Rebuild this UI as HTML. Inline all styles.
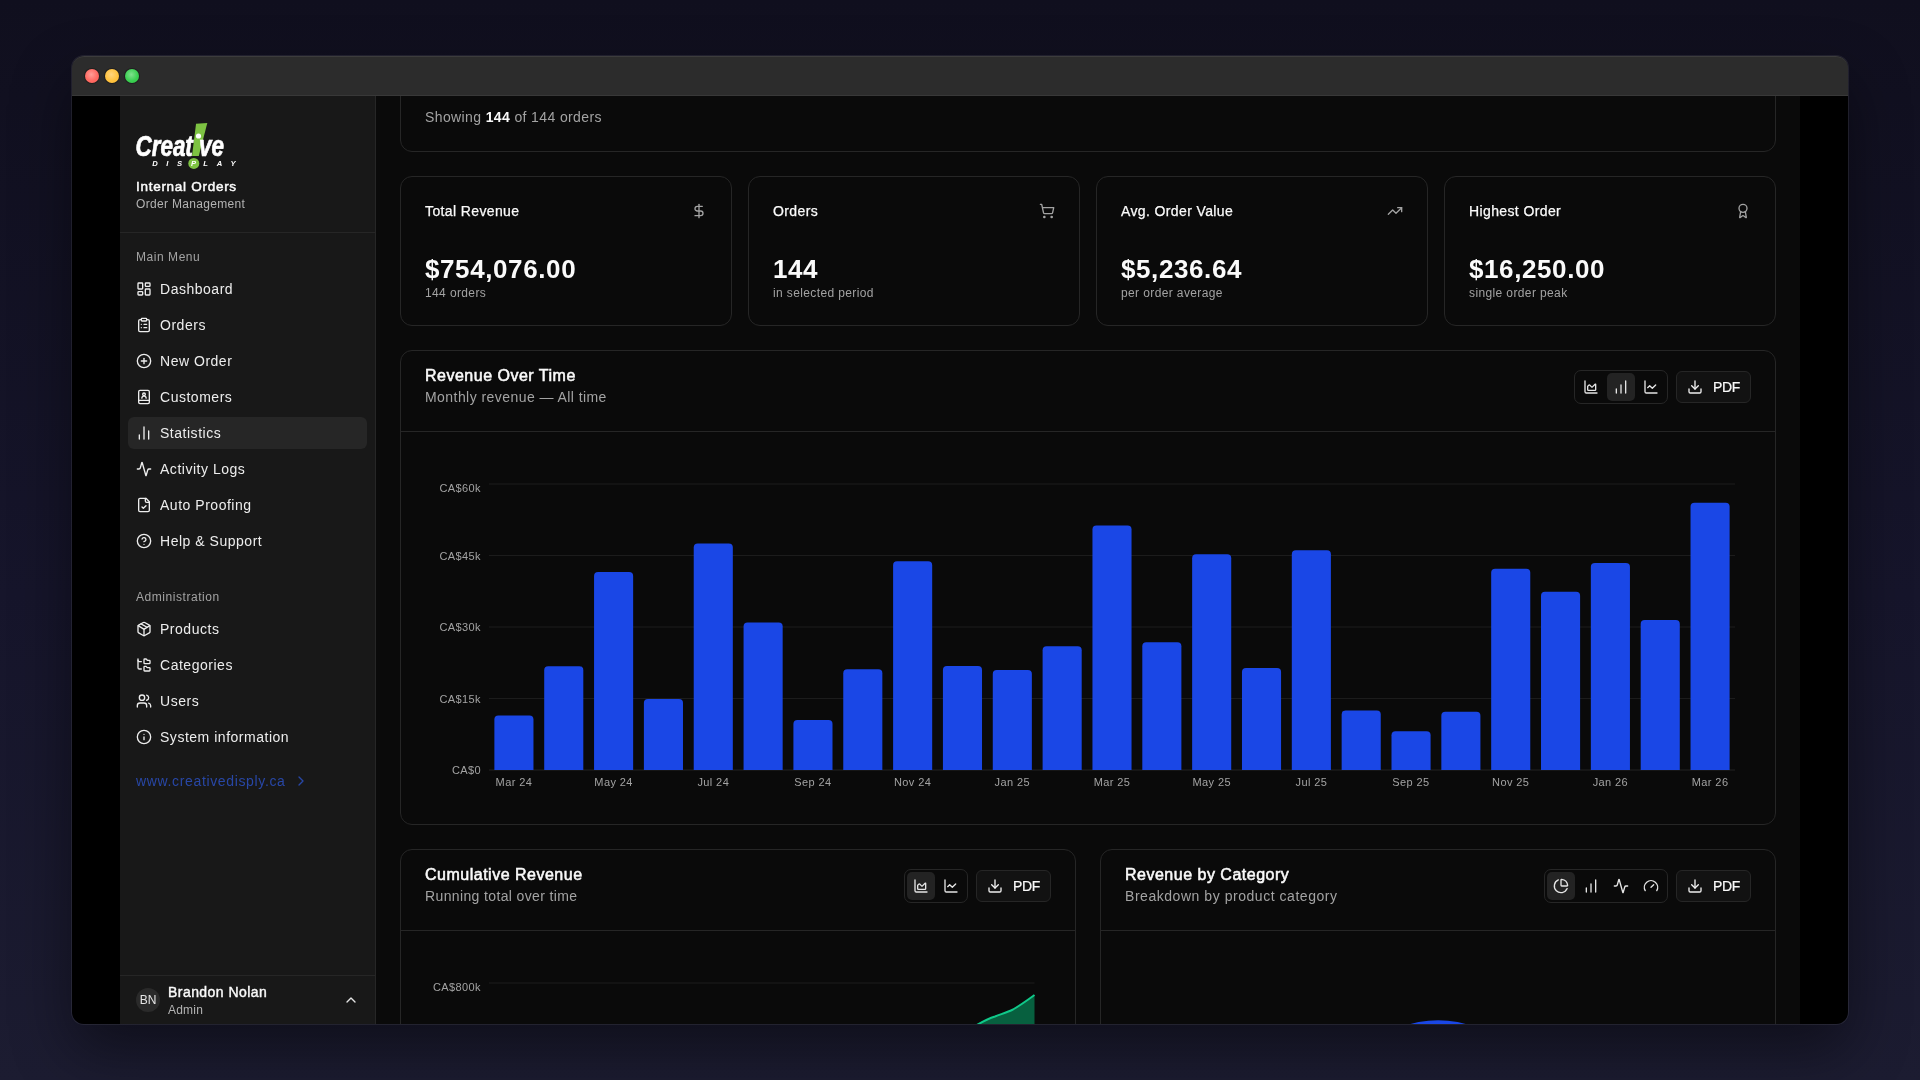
<!DOCTYPE html>
<html><head><meta charset="utf-8">
<style>
*{box-sizing:border-box;margin:0;padding:0}
html,body{width:1920px;height:1080px;overflow:hidden}
body{font-family:"Liberation Sans",sans-serif;background:linear-gradient(180deg,#100f1e 0%,#16152b 55%,#1c1c31 100%);position:relative;color:#fafafa}
.abs{position:absolute}
.t{position:absolute;white-space:nowrap}
#shadow{position:absolute;left:72px;top:56px;width:1776px;height:968px;border-radius:12px;box-shadow:0 0 0 1px rgba(255,255,255,.08),0 25px 60px rgba(0,0,0,.45)}
#win{position:absolute;left:0;top:0;width:1920px;height:1080px;clip-path:inset(56px 72px 56px 72px round 12px);will-change:transform}
.card{position:absolute;background:#0a0a0a;border:1px solid #262626;border-radius:12px}
svg.i{position:absolute;fill:none;stroke:currentColor;stroke-linecap:round;stroke-linejoin:round}
.dot{position:absolute;top:69px;width:14px;height:14px;border-radius:50%}
</style></head><body>
<div id="shadow"></div>
<div id="win">
<div class="abs" style="left:72px;top:56px;width:1776px;height:968px;background:#000"></div>
<div class="abs" style="left:120px;top:96px;width:256px;height:928px;background:#181818;border-right:1px solid #262626"></div>
<svg class="abs" style="left:130px;top:118px;width:120px;height:54px" viewBox="0 0 120 54">
<path d="M66 5.8 L77.3 5 L68.8 38 L62 38 Z" fill="#7dc242"/>
<text x="5.5" y="37.6" font-family="Liberation Sans" font-weight="700" font-style="italic" font-size="29" fill="#fff" stroke="#fff" stroke-width="0.7" textLength="88.5" lengthAdjust="spacingAndGlyphs">Creat ve</text>
<circle cx="68.5" cy="18" r="2.6" fill="#fff"/>
<circle cx="63.8" cy="45.4" r="5.5" fill="#7dc242"/>
<text x="24.9" y="47.8" text-anchor="middle" font-family="Liberation Sans" font-weight="700" font-style="italic" font-size="7.6" fill="#fff">D</text><text x="37.4" y="47.8" text-anchor="middle" font-family="Liberation Sans" font-weight="700" font-style="italic" font-size="7.6" fill="#fff">I</text><text x="49.6" y="47.8" text-anchor="middle" font-family="Liberation Sans" font-weight="700" font-style="italic" font-size="7.6" fill="#fff">S</text><text x="63.5" y="47.8" text-anchor="middle" font-family="Liberation Sans" font-weight="700" font-style="italic" font-size="7.6" fill="#fff">P</text><text x="75.6" y="47.8" text-anchor="middle" font-family="Liberation Sans" font-weight="700" font-style="italic" font-size="7.6" fill="#fff">L</text><text x="89.5" y="47.8" text-anchor="middle" font-family="Liberation Sans" font-weight="700" font-style="italic" font-size="7.6" fill="#fff">A</text><text x="103.1" y="47.8" text-anchor="middle" font-family="Liberation Sans" font-weight="700" font-style="italic" font-size="7.6" fill="#fff">Y</text>
</svg>
<div class="t " style="left:136px;top:177.5px;font-size:13.5px;line-height:17px;color:#fafafa;font-weight:400;letter-spacing:.72px;-webkit-text-stroke:.5px #fafafa">Internal Orders</div>
<div class="t " style="left:136px;top:196.5px;font-size:12px;line-height:15px;color:#b3b3b3;font-weight:400;letter-spacing:.32px">Order Management</div>
<div class="abs" style="left:120px;top:232px;width:255px;height:1px;background:#262626"></div>
<div class="t " style="left:136px;top:249.5px;font-size:12px;line-height:15px;color:#a3a3a3;font-weight:400;letter-spacing:.55px">Main Menu</div>
<svg class="i" style="left:136px;top:281px;width:16px;height:16px;color:#ededed;" viewBox="0 0 24 24" stroke-width="2"><rect width="7" height="9" x="3" y="3" rx="1"/><rect width="7" height="5" x="14" y="3" rx="1"/><rect width="7" height="9" x="14" y="12" rx="1"/><rect width="7" height="5" x="3" y="16" rx="1"/></svg>
<div class="t " style="left:160px;top:280.0px;font-size:14px;line-height:18px;color:#ededed;font-weight:400;letter-spacing:.52px">Dashboard</div>
<svg class="i" style="left:136px;top:317px;width:16px;height:16px;color:#ededed;" viewBox="0 0 24 24" stroke-width="2"><rect width="8" height="4" x="8" y="2" rx="1" ry="1"/><path d="M16 4h2a2 2 0 0 1 2 2v14a2 2 0 0 1-2 2H6a2 2 0 0 1-2-2V6a2 2 0 0 1 2-2h2"/><path d="M12 11h4"/><path d="M12 16h4"/><path d="M8 11h.01"/><path d="M8 16h.01"/></svg>
<div class="t " style="left:160px;top:316.0px;font-size:14px;line-height:18px;color:#ededed;font-weight:400;letter-spacing:.52px">Orders</div>
<svg class="i" style="left:136px;top:353px;width:16px;height:16px;color:#ededed;" viewBox="0 0 24 24" stroke-width="2"><circle cx="12" cy="12" r="10"/><path d="M8 12h8"/><path d="M12 8v8"/></svg>
<div class="t " style="left:160px;top:352.0px;font-size:14px;line-height:18px;color:#ededed;font-weight:400;letter-spacing:.52px">New Order</div>
<svg class="i" style="left:136px;top:389px;width:16px;height:16px;color:#ededed;" viewBox="0 0 24 24" stroke-width="2"><rect x="4" y="2" width="16" height="20" rx="2"/><path d="M4 17h16"/><path d="M8.8 13.8a3.2 3.2 0 0 1 6.4 0"/><circle cx="12" cy="8" r="2"/></svg>
<div class="t " style="left:160px;top:388.0px;font-size:14px;line-height:18px;color:#ededed;font-weight:400;letter-spacing:.52px">Customers</div>
<div class="abs" style="left:128px;top:417px;width:239px;height:32px;border-radius:6px;background:#262626"></div>
<svg class="i" style="left:136px;top:425px;width:16px;height:16px;color:#ededed;" viewBox="0 0 24 24" stroke-width="2"><path d="M5 21v-6"/><path d="M12 21V3"/><path d="M19 21V9"/></svg>
<div class="t " style="left:160px;top:424.0px;font-size:14px;line-height:18px;color:#ededed;font-weight:400;letter-spacing:.52px">Statistics</div>
<svg class="i" style="left:136px;top:461px;width:16px;height:16px;color:#ededed;" viewBox="0 0 24 24" stroke-width="2"><path d="M22 12h-2.48a2 2 0 0 0-1.93 1.46l-2.35 8.36a.25.25 0 0 1-.48 0L9.24 2.18a.25.25 0 0 0-.48 0l-2.35 8.36A2 2 0 0 1 4.49 12H2"/></svg>
<div class="t " style="left:160px;top:460.0px;font-size:14px;line-height:18px;color:#ededed;font-weight:400;letter-spacing:.52px">Activity Logs</div>
<svg class="i" style="left:136px;top:497px;width:16px;height:16px;color:#ededed;" viewBox="0 0 24 24" stroke-width="2"><path d="M15 2H6a2 2 0 0 0-2 2v16a2 2 0 0 0 2 2h12a2 2 0 0 0 2-2V7Z"/><path d="M14 2v4a2 2 0 0 0 2 2h4"/><path d="m9 15 2 2 4-4"/></svg>
<div class="t " style="left:160px;top:496.0px;font-size:14px;line-height:18px;color:#ededed;font-weight:400;letter-spacing:.52px">Auto Proofing</div>
<svg class="i" style="left:136px;top:533px;width:16px;height:16px;color:#ededed;" viewBox="0 0 24 24" stroke-width="2"><circle cx="12" cy="12" r="10"/><path d="M9.09 9a3 3 0 0 1 5.83 1c0 2-3 3-3 3"/><path d="M12 17h.01"/></svg>
<div class="t " style="left:160px;top:532.0px;font-size:14px;line-height:18px;color:#ededed;font-weight:400;letter-spacing:.52px">Help &amp; Support</div>
<div class="t " style="left:136px;top:589.5px;font-size:12px;line-height:15px;color:#a3a3a3;font-weight:400;letter-spacing:.55px">Administration</div>
<svg class="i" style="left:136px;top:621px;width:16px;height:16px;color:#ededed;" viewBox="0 0 24 24" stroke-width="2"><path d="M11 21.73a2 2 0 0 0 2 0l7-4A2 2 0 0 0 21 16V8a2 2 0 0 0-1-1.73l-7-4a2 2 0 0 0-2 0l-7 4A2 2 0 0 0 3 8v8a2 2 0 0 0 1 1.73z"/><path d="M12 22V12"/><path d="m3.3 7 7.703 4.734a2 2 0 0 0 1.994 0L20.7 7"/><path d="m7.5 4.27 9 5.15"/></svg>
<div class="t " style="left:160px;top:620.0px;font-size:14px;line-height:18px;color:#ededed;font-weight:400;letter-spacing:.52px">Products</div>
<svg class="i" style="left:136px;top:657px;width:16px;height:16px;color:#ededed;" viewBox="0 0 24 24" stroke-width="2"><path d="M20 10a1 1 0 0 0 1-1V6a1 1 0 0 0-1-1h-2.5a1 1 0 0 1-.8-.4l-.9-1.2A1 1 0 0 0 15 3h-2a1 1 0 0 0-1 1v5a1 1 0 0 0 1 1Z"/><path d="M20 21a1 1 0 0 0 1-1v-3a1 1 0 0 0-1-1h-2.9a1 1 0 0 1-.88-.55l-.42-.85a1 1 0 0 0-.92-.6H13a1 1 0 0 0-1 1v5a1 1 0 0 0 1 1Z"/><path d="M3 5a2 2 0 0 0 2 2h3"/><path d="M3 3v13a2 2 0 0 0 2 2h3"/></svg>
<div class="t " style="left:160px;top:656.0px;font-size:14px;line-height:18px;color:#ededed;font-weight:400;letter-spacing:.52px">Categories</div>
<svg class="i" style="left:136px;top:693px;width:16px;height:16px;color:#ededed;" viewBox="0 0 24 24" stroke-width="2"><path d="M16 21v-2a4 4 0 0 0-4-4H6a4 4 0 0 0-4 4v2"/><circle cx="9" cy="7" r="4"/><path d="M22 21v-2a4 4 0 0 0-3-3.87"/><path d="M16 3.13a4 4 0 0 1 0 7.75"/></svg>
<div class="t " style="left:160px;top:692.0px;font-size:14px;line-height:18px;color:#ededed;font-weight:400;letter-spacing:.52px">Users</div>
<svg class="i" style="left:136px;top:729px;width:16px;height:16px;color:#ededed;" viewBox="0 0 24 24" stroke-width="2"><circle cx="12" cy="12" r="10"/><path d="M12 16v-4"/><path d="M12 8h.01"/></svg>
<div class="t " style="left:160px;top:728.0px;font-size:14px;line-height:18px;color:#ededed;font-weight:400;letter-spacing:.52px">System information</div>
<div class="t " style="left:136px;top:772.0px;font-size:14px;line-height:18px;color:#2847a6;font-weight:400;letter-spacing:.65px">www.creativedisply.ca</div>
<svg class="i" style="left:293px;top:773px;width:16px;height:16px;color:#2847a6;" viewBox="0 0 24 24" stroke-width="2"><path d="m9 18 6-6-6-6"/></svg>
<div class="abs" style="left:120px;top:975px;width:255px;height:1px;background:#262626"></div>
<div class="abs" style="left:136px;top:988px;width:24px;height:24px;border-radius:50%;background:#2a2a2a"></div>
<div class="t " style="left:137px;top:992.5px;font-size:12px;line-height:15px;color:#e5e5e5;font-weight:400;width:22px;text-align:center">BN</div>
<div class="t " style="left:168px;top:983.0px;font-size:14px;line-height:18px;color:#fafafa;font-weight:400;letter-spacing:.45px;-webkit-text-stroke:.4px #fafafa">Brandon Nolan</div>
<div class="t " style="left:168px;top:1002.5px;font-size:12px;line-height:15px;color:#b3b3b3;font-weight:400;letter-spacing:.2px">Admin</div>
<svg class="i" style="left:343px;top:992px;width:16px;height:16px;color:#e5e5e5;" viewBox="0 0 24 24" stroke-width="2"><path d="m18 15-6-6-6 6"/></svg>
<div class="abs" style="left:376px;top:96px;width:1424px;height:928px;background:#0a0a0a"></div>
<div class="card" style="left:400px;top:40px;width:1376px;height:112px"></div>
<div class="t " style="left:425px;top:108.0px;font-size:14px;line-height:18px;color:#a3a3a3;font-weight:400;letter-spacing:.38px">Showing <b style="color:#fafafa;font-weight:700">144</b> of 144 orders</div>
<div class="card" style="left:400px;top:176px;width:332px;height:150px"></div>
<div class="t " style="left:425px;top:202.0px;font-size:14px;line-height:18px;color:#fafafa;font-weight:400;letter-spacing:.38px;-webkit-text-stroke:.25px #fafafa">Total Revenue</div>
<svg class="i" style="left:691px;top:203px;width:16px;height:16px;color:#a3a3a3;" viewBox="0 0 24 24" stroke-width="2"><line x1="12" x2="12" y1="2" y2="22"/><path d="M17 5H9.5a3.5 3.5 0 0 0 0 7h5a3.5 3.5 0 0 1 0 7H6"/></svg>
<div class="t " style="left:425px;top:253.0px;font-size:26px;line-height:32px;color:#fafafa;font-weight:700;letter-spacing:.6px">$754,076.00</div>
<div class="t " style="left:425px;top:285.5px;font-size:12px;line-height:15px;color:#a3a3a3;font-weight:400;letter-spacing:.38px">144 orders</div>
<div class="card" style="left:748px;top:176px;width:332px;height:150px"></div>
<div class="t " style="left:773px;top:202.0px;font-size:14px;line-height:18px;color:#fafafa;font-weight:400;letter-spacing:.38px;-webkit-text-stroke:.25px #fafafa">Orders</div>
<svg class="i" style="left:1039px;top:203px;width:16px;height:16px;color:#a3a3a3;" viewBox="0 0 24 24" stroke-width="2"><circle cx="8" cy="21" r="1"/><circle cx="19" cy="21" r="1"/><path d="M2.05 2.05h2l2.66 12.42a2 2 0 0 0 2 1.58h9.78a2 2 0 0 0 1.95-1.57l1.65-7.43H5.12"/></svg>
<div class="t " style="left:773px;top:253.0px;font-size:26px;line-height:32px;color:#fafafa;font-weight:700;letter-spacing:.6px">144</div>
<div class="t " style="left:773px;top:285.5px;font-size:12px;line-height:15px;color:#a3a3a3;font-weight:400;letter-spacing:.38px">in selected period</div>
<div class="card" style="left:1096px;top:176px;width:332px;height:150px"></div>
<div class="t " style="left:1121px;top:202.0px;font-size:14px;line-height:18px;color:#fafafa;font-weight:400;letter-spacing:.38px;-webkit-text-stroke:.25px #fafafa">Avg. Order Value</div>
<svg class="i" style="left:1387px;top:203px;width:16px;height:16px;color:#a3a3a3;" viewBox="0 0 24 24" stroke-width="2"><polyline points="22 7 13.5 15.5 8.5 10.5 2 17"/><polyline points="16 7 22 7 22 13"/></svg>
<div class="t " style="left:1121px;top:253.0px;font-size:26px;line-height:32px;color:#fafafa;font-weight:700;letter-spacing:.6px">$5,236.64</div>
<div class="t " style="left:1121px;top:285.5px;font-size:12px;line-height:15px;color:#a3a3a3;font-weight:400;letter-spacing:.38px">per order average</div>
<div class="card" style="left:1444px;top:176px;width:332px;height:150px"></div>
<div class="t " style="left:1469px;top:202.0px;font-size:14px;line-height:18px;color:#fafafa;font-weight:400;letter-spacing:.38px;-webkit-text-stroke:.25px #fafafa">Highest Order</div>
<svg class="i" style="left:1735px;top:203px;width:16px;height:16px;color:#a3a3a3;" viewBox="0 0 24 24" stroke-width="2"><path d="m15.477 12.89 1.515 8.526a.5.5 0 0 1-.81.47l-3.58-2.687a1 1 0 0 0-1.197 0l-3.586 2.686a.5.5 0 0 1-.81-.469l1.514-8.526"/><circle cx="12" cy="8" r="6"/></svg>
<div class="t " style="left:1469px;top:253.0px;font-size:26px;line-height:32px;color:#fafafa;font-weight:700;letter-spacing:.6px">$16,250.00</div>
<div class="t " style="left:1469px;top:285.5px;font-size:12px;line-height:15px;color:#a3a3a3;font-weight:400;letter-spacing:.38px">single order peak</div>
<div class="card" style="left:400px;top:350px;width:1376px;height:475px"></div>
<div class="abs" style="left:401px;top:431px;width:1374px;height:1px;background:#262626"></div>
<div class="t " style="left:425px;top:365.8px;font-size:16px;line-height:20px;color:#fafafa;font-weight:400;letter-spacing:.5px;-webkit-text-stroke:.55px #fafafa">Revenue Over Time</div>
<div class="t " style="left:425px;top:388.0px;font-size:14px;line-height:18px;color:#a3a3a3;font-weight:400;letter-spacing:0.44px">Monthly revenue — All time</div>
<div class="abs" style="left:1676px;top:371px;width:75px;height:32px;border-radius:6px;background:#121212;border:1px solid #262626"></div>
<svg class="i" style="left:1687px;top:379px;width:16px;height:16px;color:#f0f0f0;" viewBox="0 0 24 24" stroke-width="2"><path d="M21 15v4a2 2 0 0 1-2 2H5a2 2 0 0 1-2-2v-4"/><polyline points="7 10 12 15 17 10"/><line x1="12" x2="12" y1="15" y2="3"/></svg>
<div class="t " style="left:1713px;top:378.0px;font-size:14px;line-height:18px;color:#fafafa;font-weight:400;letter-spacing:-.35px;-webkit-text-stroke:.2px #fafafa">PDF</div>
<div class="abs" style="left:1573.6px;top:370px;width:94px;height:34px;border-radius:7px;border:1px solid #262626"></div>
<svg class="i" style="left:1583.1999999999998px;top:379.2px;width:16px;height:16px;color:#e5e5e5;" viewBox="0 0 24 24" stroke-width="2"><path d="M3 3v16a2 2 0 0 0 2 2h16"/><path d="M7 11.207a.5.5 0 0 1 .146-.353l2-2a.5.5 0 0 1 .708 0l3.292 3.292a.5.5 0 0 0 .708 0l4.292-4.292a.5.5 0 0 1 .854.353V16a1 1 0 0 1-1 1H8a1 1 0 0 1-1-1z"/></svg>
<div class="abs" style="left:1606.6px;top:373px;width:28px;height:28px;border-radius:5px;background:#232323"></div>
<svg class="i" style="left:1613.1999999999998px;top:379.2px;width:16px;height:16px;color:#e5e5e5;" viewBox="0 0 24 24" stroke-width="2"><path d="M5 21v-6"/><path d="M12 21V9"/><path d="M19 21V3"/></svg>
<svg class="i" style="left:1643.1999999999998px;top:379.2px;width:16px;height:16px;color:#e5e5e5;" viewBox="0 0 24 24" stroke-width="2"><path d="M3 3v16a2 2 0 0 0 2 2h16"/><path d="m19 9-5 5-4-4-3 3"/></svg>
<div class="card" style="left:400px;top:849px;width:676px;height:500px"></div>
<div class="abs" style="left:401px;top:930px;width:674px;height:1px;background:#262626"></div>
<div class="t " style="left:425px;top:864.8px;font-size:16px;line-height:20px;color:#fafafa;font-weight:400;letter-spacing:.5px;-webkit-text-stroke:.55px #fafafa">Cumulative Revenue</div>
<div class="t " style="left:425px;top:887.0px;font-size:14px;line-height:18px;color:#a3a3a3;font-weight:400;letter-spacing:0.37px">Running total over time</div>
<div class="abs" style="left:976px;top:870px;width:75px;height:32px;border-radius:6px;background:#121212;border:1px solid #262626"></div>
<svg class="i" style="left:987px;top:878px;width:16px;height:16px;color:#f0f0f0;" viewBox="0 0 24 24" stroke-width="2"><path d="M21 15v4a2 2 0 0 1-2 2H5a2 2 0 0 1-2-2v-4"/><polyline points="7 10 12 15 17 10"/><line x1="12" x2="12" y1="15" y2="3"/></svg>
<div class="t " style="left:1013px;top:877.0px;font-size:14px;line-height:18px;color:#fafafa;font-weight:400;letter-spacing:-.35px;-webkit-text-stroke:.2px #fafafa">PDF</div>
<div class="abs" style="left:903.6px;top:869px;width:64px;height:34px;border-radius:7px;border:1px solid #262626"></div>
<div class="abs" style="left:906.6px;top:872px;width:28px;height:28px;border-radius:5px;background:#232323"></div>
<svg class="i" style="left:913.2px;top:878.2px;width:16px;height:16px;color:#e5e5e5;" viewBox="0 0 24 24" stroke-width="2"><path d="M3 3v16a2 2 0 0 0 2 2h16"/><path d="M7 11.207a.5.5 0 0 1 .146-.353l2-2a.5.5 0 0 1 .708 0l3.292 3.292a.5.5 0 0 0 .708 0l4.292-4.292a.5.5 0 0 1 .854.353V16a1 1 0 0 1-1 1H8a1 1 0 0 1-1-1z"/></svg>
<svg class="i" style="left:943.2px;top:878.2px;width:16px;height:16px;color:#e5e5e5;" viewBox="0 0 24 24" stroke-width="2"><path d="M3 3v16a2 2 0 0 0 2 2h16"/><path d="m19 9-5 5-4-4-3 3"/></svg>
<div class="card" style="left:1100px;top:849px;width:676px;height:500px"></div>
<div class="abs" style="left:1101px;top:930px;width:674px;height:1px;background:#262626"></div>
<div class="t " style="left:1125px;top:864.8px;font-size:16px;line-height:20px;color:#fafafa;font-weight:400;letter-spacing:.5px;-webkit-text-stroke:.55px #fafafa">Revenue by Category</div>
<div class="t " style="left:1125px;top:887.0px;font-size:14px;line-height:18px;color:#a3a3a3;font-weight:400;letter-spacing:0.54px">Breakdown by product category</div>
<div class="abs" style="left:1676px;top:870px;width:75px;height:32px;border-radius:6px;background:#121212;border:1px solid #262626"></div>
<svg class="i" style="left:1687px;top:878px;width:16px;height:16px;color:#f0f0f0;" viewBox="0 0 24 24" stroke-width="2"><path d="M21 15v4a2 2 0 0 1-2 2H5a2 2 0 0 1-2-2v-4"/><polyline points="7 10 12 15 17 10"/><line x1="12" x2="12" y1="15" y2="3"/></svg>
<div class="t " style="left:1713px;top:877.0px;font-size:14px;line-height:18px;color:#fafafa;font-weight:400;letter-spacing:-.35px;-webkit-text-stroke:.2px #fafafa">PDF</div>
<div class="abs" style="left:1543.6px;top:869px;width:124px;height:34px;border-radius:7px;border:1px solid #262626"></div>
<div class="abs" style="left:1546.6px;top:872px;width:28px;height:28px;border-radius:5px;background:#232323"></div>
<svg class="i" style="left:1553.1999999999998px;top:878.2px;width:16px;height:16px;color:#e5e5e5;" viewBox="0 0 24 24" stroke-width="2"><path d="M21 12c.552 0 1.005-.449.95-.998a10 10 0 0 0-8.953-8.951c-.55-.055-.998.398-.998.95v8a1 1 0 0 0 1 1z"/><path d="M21.21 15.89A10 10 0 1 1 8 2.83"/></svg>
<svg class="i" style="left:1583.1999999999998px;top:878.2px;width:16px;height:16px;color:#e5e5e5;" viewBox="0 0 24 24" stroke-width="2"><path d="M5 21v-6"/><path d="M12 21V9"/><path d="M19 21V3"/></svg>
<svg class="i" style="left:1613.1999999999998px;top:878.2px;width:16px;height:16px;color:#e5e5e5;" viewBox="0 0 24 24" stroke-width="2"><path d="M22 12h-2.48a2 2 0 0 0-1.93 1.46l-2.35 8.36a.25.25 0 0 1-.48 0L9.24 2.18a.25.25 0 0 0-.48 0l-2.35 8.36A2 2 0 0 1 4.49 12H2"/></svg>
<svg class="i" style="left:1643.1999999999998px;top:878.2px;width:16px;height:16px;color:#e5e5e5;" viewBox="0 0 24 24" stroke-width="2"><path d="m12 14 4-4"/><path d="M3.34 19a10 10 0 1 1 17.32 0"/></svg>
<svg class="abs" style="left:376px;top:96px;width:1424px;height:928px;overflow:visible" viewBox="376 96 1424 928">
<line x1="489" x2="1735" y1="484" y2="484" stroke="#1c1c1c" stroke-width="1"/>
<line x1="489" x2="1735" y1="555.5" y2="555.5" stroke="#1c1c1c" stroke-width="1"/>
<line x1="489" x2="1735" y1="627" y2="627" stroke="#1c1c1c" stroke-width="1"/>
<line x1="489" x2="1735" y1="698.5" y2="698.5" stroke="#1c1c1c" stroke-width="1"/>
<line x1="489" x2="1735" y1="770" y2="770" stroke="#222" stroke-width="1"/>
<path d="M494.37 770 V719.40 Q494.37 715.40 498.37 715.40 H529.47 Q533.47 715.40 533.47 719.40 V770 Z" fill="#1a47e6"/>
<path d="M544.21 770 V670.20 Q544.21 666.20 548.21 666.20 H579.31 Q583.31 666.20 583.31 670.20 V770 Z" fill="#1a47e6"/>
<path d="M594.05 770 V576.00 Q594.05 572.00 598.05 572.00 H629.15 Q633.15 572.00 633.15 576.00 V770 Z" fill="#1a47e6"/>
<path d="M643.89 770 V703.00 Q643.89 699.00 647.89 699.00 H678.99 Q682.99 699.00 682.99 703.00 V770 Z" fill="#1a47e6"/>
<path d="M693.73 770 V547.50 Q693.73 543.50 697.73 543.50 H728.83 Q732.83 543.50 732.83 547.50 V770 Z" fill="#1a47e6"/>
<path d="M743.57 770 V626.60 Q743.57 622.60 747.57 622.60 H778.67 Q782.67 622.60 782.67 626.60 V770 Z" fill="#1a47e6"/>
<path d="M793.41 770 V724.00 Q793.41 720.00 797.41 720.00 H828.51 Q832.51 720.00 832.51 724.00 V770 Z" fill="#1a47e6"/>
<path d="M843.25 770 V673.20 Q843.25 669.20 847.25 669.20 H878.35 Q882.35 669.20 882.35 673.20 V770 Z" fill="#1a47e6"/>
<path d="M893.09 770 V565.20 Q893.09 561.20 897.09 561.20 H928.19 Q932.19 561.20 932.19 565.20 V770 Z" fill="#1a47e6"/>
<path d="M942.93 770 V669.90 Q942.93 665.90 946.93 665.90 H978.03 Q982.03 665.90 982.03 669.90 V770 Z" fill="#1a47e6"/>
<path d="M992.77 770 V674.10 Q992.77 670.10 996.77 670.10 H1027.87 Q1031.87 670.10 1031.87 674.10 V770 Z" fill="#1a47e6"/>
<path d="M1042.61 770 V650.20 Q1042.61 646.20 1046.61 646.20 H1077.71 Q1081.71 646.20 1081.71 650.20 V770 Z" fill="#1a47e6"/>
<path d="M1092.45 770 V529.40 Q1092.45 525.40 1096.45 525.40 H1127.55 Q1131.55 525.40 1131.55 529.40 V770 Z" fill="#1a47e6"/>
<path d="M1142.29 770 V646.30 Q1142.29 642.30 1146.29 642.30 H1177.39 Q1181.39 642.30 1181.39 646.30 V770 Z" fill="#1a47e6"/>
<path d="M1192.13 770 V558.30 Q1192.13 554.30 1196.13 554.30 H1227.23 Q1231.23 554.30 1231.23 558.30 V770 Z" fill="#1a47e6"/>
<path d="M1241.97 770 V672.10 Q1241.97 668.10 1245.97 668.10 H1277.07 Q1281.07 668.10 1281.07 672.10 V770 Z" fill="#1a47e6"/>
<path d="M1291.81 770 V554.20 Q1291.81 550.20 1295.81 550.20 H1326.91 Q1330.91 550.20 1330.91 554.20 V770 Z" fill="#1a47e6"/>
<path d="M1341.65 770 V714.40 Q1341.65 710.40 1345.65 710.40 H1376.75 Q1380.75 710.40 1380.75 714.40 V770 Z" fill="#1a47e6"/>
<path d="M1391.49 770 V735.30 Q1391.49 731.30 1395.49 731.30 H1426.59 Q1430.59 731.30 1430.59 735.30 V770 Z" fill="#1a47e6"/>
<path d="M1441.33 770 V715.70 Q1441.33 711.70 1445.33 711.70 H1476.43 Q1480.43 711.70 1480.43 715.70 V770 Z" fill="#1a47e6"/>
<path d="M1491.17 770 V572.70 Q1491.17 568.70 1495.17 568.70 H1526.27 Q1530.27 568.70 1530.27 572.70 V770 Z" fill="#1a47e6"/>
<path d="M1541.01 770 V595.80 Q1541.01 591.80 1545.01 591.80 H1576.11 Q1580.11 591.80 1580.11 595.80 V770 Z" fill="#1a47e6"/>
<path d="M1590.85 770 V566.90 Q1590.85 562.90 1594.85 562.90 H1625.95 Q1629.95 562.90 1629.95 566.90 V770 Z" fill="#1a47e6"/>
<path d="M1640.69 770 V623.90 Q1640.69 619.90 1644.69 619.90 H1675.79 Q1679.79 619.90 1679.79 623.90 V770 Z" fill="#1a47e6"/>
<path d="M1690.53 770 V506.70 Q1690.53 502.70 1694.53 502.70 H1725.63 Q1729.63 502.70 1729.63 506.70 V770 Z" fill="#1a47e6"/>
<text x="513.9" y="786" text-anchor="middle" font-size="11" fill="#a3a3a3" font-family="Liberation Sans" letter-spacing=".4">Mar 24</text>
<text x="613.6" y="786" text-anchor="middle" font-size="11" fill="#a3a3a3" font-family="Liberation Sans" letter-spacing=".4">May 24</text>
<text x="713.3" y="786" text-anchor="middle" font-size="11" fill="#a3a3a3" font-family="Liberation Sans" letter-spacing=".4">Jul 24</text>
<text x="813.0" y="786" text-anchor="middle" font-size="11" fill="#a3a3a3" font-family="Liberation Sans" letter-spacing=".4">Sep 24</text>
<text x="912.6" y="786" text-anchor="middle" font-size="11" fill="#a3a3a3" font-family="Liberation Sans" letter-spacing=".4">Nov 24</text>
<text x="1012.3" y="786" text-anchor="middle" font-size="11" fill="#a3a3a3" font-family="Liberation Sans" letter-spacing=".4">Jan 25</text>
<text x="1112.0" y="786" text-anchor="middle" font-size="11" fill="#a3a3a3" font-family="Liberation Sans" letter-spacing=".4">Mar 25</text>
<text x="1211.7" y="786" text-anchor="middle" font-size="11" fill="#a3a3a3" font-family="Liberation Sans" letter-spacing=".4">May 25</text>
<text x="1311.4" y="786" text-anchor="middle" font-size="11" fill="#a3a3a3" font-family="Liberation Sans" letter-spacing=".4">Jul 25</text>
<text x="1411.0" y="786" text-anchor="middle" font-size="11" fill="#a3a3a3" font-family="Liberation Sans" letter-spacing=".4">Sep 25</text>
<text x="1510.7" y="786" text-anchor="middle" font-size="11" fill="#a3a3a3" font-family="Liberation Sans" letter-spacing=".4">Nov 25</text>
<text x="1610.4" y="786" text-anchor="middle" font-size="11" fill="#a3a3a3" font-family="Liberation Sans" letter-spacing=".4">Jan 26</text>
<text x="1710.1" y="786" text-anchor="middle" font-size="11" fill="#a3a3a3" font-family="Liberation Sans" letter-spacing=".4">Mar 26</text>
<text x="481" y="492" text-anchor="end" font-size="11" fill="#a3a3a3" font-family="Liberation Sans" letter-spacing=".4">CA$60k</text>
<text x="481" y="559.5" text-anchor="end" font-size="11" fill="#a3a3a3" font-family="Liberation Sans" letter-spacing=".4">CA$45k</text>
<text x="481" y="631" text-anchor="end" font-size="11" fill="#a3a3a3" font-family="Liberation Sans" letter-spacing=".4">CA$30k</text>
<text x="481" y="702.5" text-anchor="end" font-size="11" fill="#a3a3a3" font-family="Liberation Sans" letter-spacing=".4">CA$15k</text>
<text x="481" y="774" text-anchor="end" font-size="11" fill="#a3a3a3" font-family="Liberation Sans" letter-spacing=".4">CA$0</text>
<line x1="489" x2="1034.5" y1="983" y2="983" stroke="#1c1c1c" stroke-width="1"/>
<text x="481" y="991" text-anchor="end" font-size="11" fill="#a3a3a3" font-family="Liberation Sans" letter-spacing=".4">CA$800k</text>
<path d="M975 1026 C 982 1022, 988 1018.5, 995 1016.5 C 1003 1013.5, 1008 1012, 1013 1009.5 C 1020 1005.5, 1027 1000.5, 1034.5 995 V1026 Z" fill="#07603f"/>
<path d="M975 1026 C 982 1022, 988 1018.5, 995 1016.5 C 1003 1013.5, 1008 1012, 1013 1009.5 C 1020 1005.5, 1027 1000.5, 1034.5 995" fill="none" stroke="#10c98a" stroke-width="2"/>
<circle cx="1438.1" cy="1120.2" r="100" fill="#1a47e6"/>
</svg>
<div class="abs" style="left:72px;top:56px;width:1776px;height:40px;background:#2c2c2c;border-bottom:1px solid #383838"></div>
<div class="dot" style="left:85px;background:radial-gradient(circle at 45% 40%,#ff9d97 0%,#ff6a62 55%,#fe5f57 100%);box-shadow:0 0 0 1px rgba(0,0,0,.3)"></div>
<div class="dot" style="left:105px;background:radial-gradient(circle at 45% 40%,#ffd57e 0%,#ffc23f 55%,#febc2e 100%);box-shadow:0 0 0 1px rgba(0,0,0,.3)"></div>
<div class="dot" style="left:125px;background:radial-gradient(circle at 45% 40%,#80e08e 0%,#3ccf52 55%,#28c840 100%);box-shadow:0 0 0 1px rgba(0,0,0,.3)"></div>
<div class="abs" style="left:72px;top:56px;width:1776px;height:40px;border-radius:12px 12px 0 0;border-top:1px solid rgba(255,255,255,.08);pointer-events:none"></div>
</div>
</body></html>
